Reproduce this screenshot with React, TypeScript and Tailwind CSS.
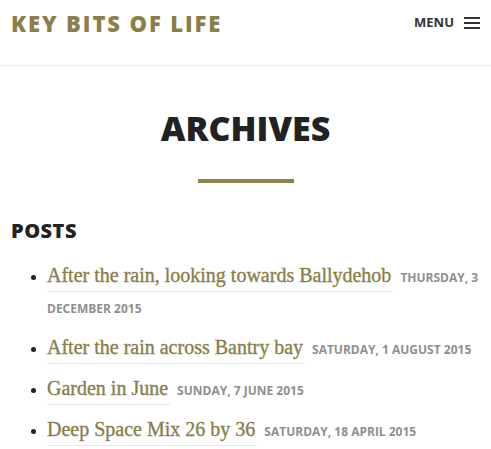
import React from "react";

const posts = [
  { title: "After the rain, looking towards Ballydehob", date: "Thursday, 3 December 2015" },
  { title: "After the rain across Bantry bay", date: "Saturday, 1 August 2015" },
  { title: "Garden in June", date: "Sunday, 7 June 2015" },
  { title: "Deep Space Mix 26 by 36", date: "Saturday, 18 April 2015" },
];

export default function App() {
  return (
    <div className="w-[491px] h-[449px] overflow-hidden bg-white" style={{ fontFamily: '"Open Sans", sans-serif' }}>
      <header className="h-[66px] border-b border-[#ececec] flex items-start justify-between px-[11px]">
        <div className="h-[45px] flex items-center">
          <span className="text-[22px] font-extrabold text-[#8a7e4c] tracking-[1.9px] uppercase leading-none">
            Key Bits of Life
          </span>
        </div>
        <div className="h-[45px] flex items-center gap-[10px]">
          <span className="text-[13px] font-bold text-[#333] leading-none">MENU</span>
          <svg width="16" height="12" viewBox="0 0 16 12" className="mt-[1px]">
            <rect x="0" y="0" width="16" height="2" fill="#333" />
            <rect x="0" y="5" width="16" height="2" fill="#333" />
            <rect x="0" y="10" width="16" height="2" fill="#333" />
          </svg>
        </div>
      </header>
      <main className="px-[11px]">
        <div className="flex flex-col items-center pt-[45px]">
          <h1 className="text-[34px] font-extrabold text-[#222] leading-none tracking-[0px]">ARCHIVES</h1>
          <div className="mt-[34px] w-[96px] h-[4px] bg-[#8f8150]" />
        </div>
        <h2 className="mt-[38px] text-[20px] font-extrabold text-[#222] leading-none tracking-[0.5px]">POSTS</h2>
        <ul className="mt-[19px] list-disc pl-[36px] marker:text-[#222] marker:text-[16px]">
          {posts.map((p) => (
            <li
              key={p.title}
              className="mb-[10px] text-[20px] leading-[31px] text-[#222]"
              style={{ fontFamily: '"Liberation Serif", serif' }}
            >
              <a className="text-[#8a7e4c] border-b border-[#e8e8e8] pb-[5px] pr-[2px] mr-[7px] [-webkit-text-stroke:0.35px_#8a7e4c]">
                {p.title}
              </a>
              <span
                className="text-[12px] leading-none font-bold uppercase text-[#8f8f8f]"
                style={{ fontFamily: '"Open Sans", sans-serif' }}
              >
                {p.date}
              </span>
            </li>
          ))}
        </ul>
      </main>
    </div>
  );
}
